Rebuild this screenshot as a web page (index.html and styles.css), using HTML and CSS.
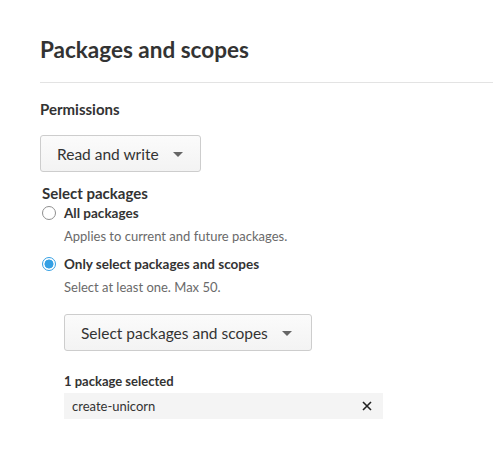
FILE: index.html
```html
<!DOCTYPE html>
<html>
<head>
<meta charset="utf-8">
<link rel="stylesheet" href="styles.css">
</head>
<body>
<div class="page">
  <h1 class="title">Packages and scopes</h1>
  <div class="rule"></div>
  <div class="label">Permissions</div>
  <button class="select perm">Read and write <span class="caret"></span></button>
  <div class="section-label">Select packages</div>
  <div class="radio-row">
    <span class="radio"></span>
    <div class="radio-text">
      <div class="radio-title">All packages</div>
      <div class="radio-help">Applies to current and future packages.</div>
    </div>
  </div>
  <div class="radio-row">
    <span class="radio checked"></span>
    <div class="radio-text">
      <div class="radio-title">Only select packages and scopes</div>
      <div class="radio-help">Select at least one. Max 50.</div>
      <button class="select pkgs">Select packages and scopes <span class="caret"></span></button>
      <div class="count">1 package selected</div>
      <div class="chip">
        <span>create-unicorn</span>
        <svg class="x" width="10" height="10" viewBox="0 0 10 10"><path d="M1 1L9 9M9 1L1 9" stroke="#222" stroke-width="1.6" fill="none"/></svg>
      </div>
    </div>
  </div>
</div>
</body>
</html>
```
FILE: styles.css
```css
* { box-sizing: border-box; }
body {
  margin: 0;
  background: #fff;
  font-family: Lato, "Liberation Sans", sans-serif;
  color: #333;
}
.page {
  padding: 36px 0 0 40px;
}
.title {
  margin: 0;
  font-size: 22.5px;
  font-weight: 700;
  line-height: 28px;
  color: #333;
}
.rule {
  height: 1px;
  background: #e3e3e3;
  margin-top: 18px;
}
.label {
  margin-top: 17px;
  font-size: 15px;
  font-weight: 700;
  line-height: 18px;
}
.select {
  display: flex;
  align-items: center;
  height: 37px;
  border: 1px solid #cdcdcd;
  border-radius: 3px;
  background: linear-gradient(#fbfbfb, #f3f3f3);
  font-family: inherit;
  font-size: 15.5px;
  color: #333;
  padding: 0 12px 0 16px;
  white-space: nowrap;
  cursor: pointer;
}
.perm {
  margin-top: 17px;
  width: 161px;
}
.caret {
  display: inline-block;
  flex: none;
  width: 0;
  height: 0;
  border-left: 5px solid transparent;
  border-right: 5px solid transparent;
  border-top: 5px solid #666;
  margin-left: 14px;
  margin-top: 2px;
}
.section-label {
  margin-top: 12px;
  margin-left: 2px;
  font-size: 15px;
  font-weight: 700;
  line-height: 18px;
}
.radio-row {
  display: flex;
  margin-left: 2px;
}
.radio {
  flex: none;
  width: 14px;
  height: 14px;
  border: 1px solid #8f8f8f;
  border-radius: 50%;
  margin-top: 4px;
  margin-right: 8px;
}
.radio.checked {
  border: 1.5px solid #35a0e4;
  background: radial-gradient(circle, #35a0e4 0 4.2px, #fff 4.8px);
}
.radio-text {
  display: flex;
  flex-direction: column;
}
.radio-title {
  font-size: 13.5px;
  font-weight: 700;
  line-height: 22px;
}
.radio-help {
  font-size: 13px;
  color: #6a6a6a;
  line-height: 18px;
  margin-top: 3px;
  margin-bottom: 8px;
}
.pkgs {
  margin-top: 10px;
  width: 248px;
  padding-left: 16px;
}
.count {
  margin-top: 22px;
  font-size: 13px;
  font-weight: 700;
  line-height: 17px;
}
.chip {
  margin-top: 3px;
  width: 319px;
  height: 26px;
  background: #f4f4f4;
  display: flex;
  align-items: center;
  justify-content: space-between;
  padding: 0 11px 0 8px;
  font-size: 13px;
  color: #333;
}
.x { display: block; }
```
